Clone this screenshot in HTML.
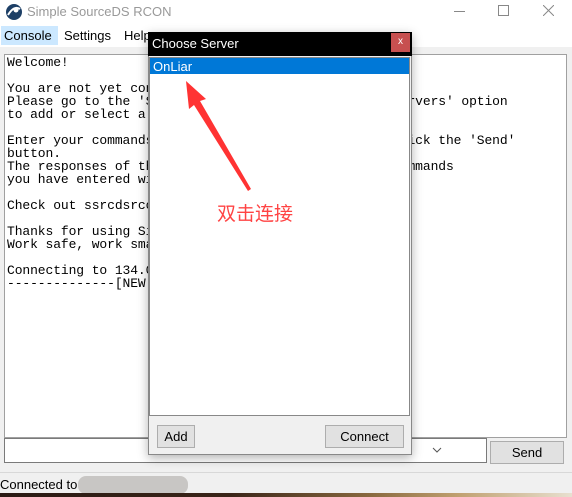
<!DOCTYPE html>
<html><head><meta charset="utf-8"><style>
*{margin:0;padding:0;box-sizing:border-box}
body{width:572px;height:497px;overflow:hidden;background:#f0f0f0;font-family:"Liberation Sans","Noto Sans CJK SC",sans-serif;font-size:12px;position:relative;color:#000}
.abs{position:absolute}
.mono{font-family:"Liberation Mono",monospace;font-size:13px;line-height:13px;white-space:pre;color:#000;letter-spacing:-0.1px}
</style></head><body>
<div class="abs" style="left:0;top:0;width:572px;height:47px;background:#fff"></div>
<svg class="abs" style="left:5px;top:3px" width="18" height="18" viewBox="0 0 18 18"><circle cx="9" cy="9" r="8" fill="#1d3f66"/><path d="M3 12 Q9 2 15 6" stroke="#fff" stroke-width="2" fill="none"/><circle cx="11" cy="7" r="2.5" fill="#fff"/></svg>
<div class="abs" style="left:27px;top:4px;font-size:13px;color:#999">Simple SourceDS RCON</div>
<div class="abs" style="left:454px;top:11px;width:11px;height:1px;background:#888"></div>
<div class="abs" style="left:498px;top:5px;width:11px;height:11px;border:1px solid #888"></div>
<svg class="abs" style="left:543px;top:5px" width="11" height="11"><path d="M0 0L11 11M11 0L0 11" stroke="#888" stroke-width="1"/></svg>
<div class="abs" style="left:1px;top:26px;width:57px;height:19px;background:#cce8ff"></div>
<div class="abs" style="left:4px;top:28px;font-size:13px">Console</div>
<div class="abs" style="left:64px;top:28px;font-size:13px">Settings</div>
<div class="abs" style="left:124px;top:28px;font-size:13px">Help</div>
<div class="abs" style="left:4px;top:54px;width:563px;height:384px;background:#fff;border:1px solid #a0a0a0"></div>
<div class="abs mono" style="left:7px;top:56px">Welcome!

You are not yet connected to any server.
Please go to the 'Settings' menu, and select the 'Servers' option
to add or select a server.

Enter your commands in the textbox below and then click the 'Send'
button.
The responses of the server will be shown for the commands
you have entered with this tool.

Check out ssrcdsrcon on github.

Thanks for using Simple SourceDS RCON (SSRCDS) again,
Work safe, work smart.

Connecting to 134.0.0.0...
--------------[NEW CONNECTION]--------------</div>
<div class="abs" style="left:4px;top:438px;width:483px;height:25px;background:#fff;border:1px solid #7a7a7a"></div>
<svg class="abs" style="left:432px;top:446px" width="10" height="8"><path d="M1 2 L5 6 L9 2" stroke="#555" fill="none"/></svg>
<div class="abs" style="left:490px;top:441px;width:74px;height:23px;background:#e1e1e1;border:1px solid #adadad;text-align:center;line-height:21px;font-size:13px">Send</div>
<div class="abs" style="left:0;top:472px;width:572px;height:1px;background:#d8d8d8"></div>
<div class="abs" style="left:0;top:477px;font-size:13px">Connected to</div>
<div class="abs" style="left:78px;top:476px;width:110px;height:18px;background:#c8c6c4;border-radius:8px"></div>
<div class="abs" style="left:0;top:493px;width:572px;height:4px;background:linear-gradient(90deg,#2a1a14,#3a2418 40%,#8a6a40 65%,#c0a070 80%,#e8e0d0)"></div>
<div class="abs" style="left:148px;top:32px;width:264px;height:423px;background:#f0f0f0;border:1px solid #888;box-shadow:0 3px 10px rgba(0,0,0,.3)"></div>
<div class="abs" style="left:148px;top:32px;width:264px;height:24px;background:#000"></div>
<div class="abs" style="left:152px;top:36px;font-size:13px;color:#fff">Choose Server</div>
<div class="abs" style="left:391px;top:33px;width:19px;height:19px;background:#c75050;color:#fff;font-size:10px;text-align:center;line-height:18px">x</div>
<div class="abs" style="left:149px;top:57px;width:261px;height:359px;background:#fff;border:1px solid #888"></div>
<div class="abs" style="left:150px;top:58px;width:259px;height:16px;background:#0078d7"></div>
<div class="abs" style="left:153px;top:59px;font-size:13px;color:#fff">OnLiar</div>
<svg class="abs" style="left:180px;top:75px" width="80" height="120"><polygon points="6,6 26,24 20,26 71,114 68,116 14,30 9,34" fill="#ff3333"/></svg>
<div class="abs" style="left:217px;top:199px;font-size:19px;color:#ff4444">双击连接</div>
<div class="abs" style="left:157px;top:425px;width:38px;height:23px;background:#e1e1e1;border:1px solid #adadad;text-align:center;line-height:21px;font-size:13px">Add</div>
<div class="abs" style="left:325px;top:425px;width:79px;height:23px;background:#e1e1e1;border:1px solid #adadad;text-align:center;line-height:21px;font-size:13px">Connect</div>
</body></html>
